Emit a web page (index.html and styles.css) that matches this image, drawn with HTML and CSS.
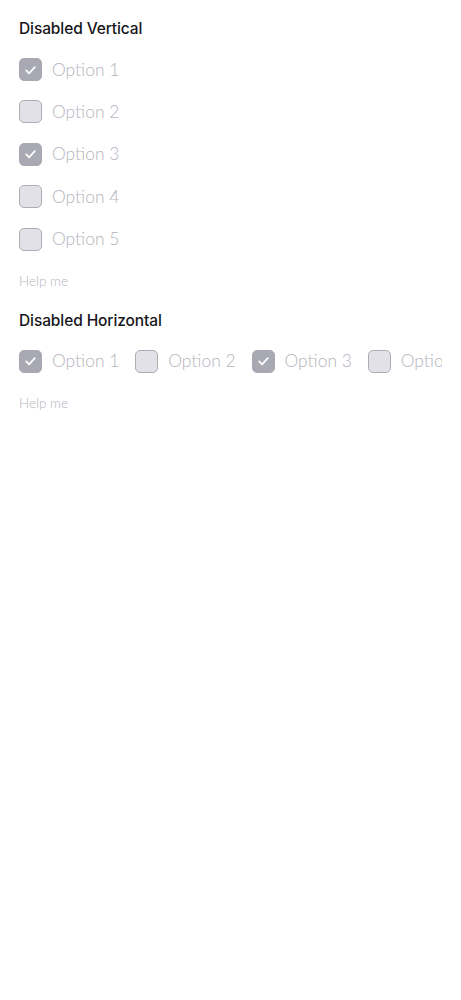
FILE: index.html
```html
<!DOCTYPE html>
<html>
<head>
<meta charset="utf-8">
<link rel="stylesheet" href="styles.css">
</head>
<body>
<div class="page">
  <section class="group">
    <h2 class="title">Disabled Vertical</h2>
    <div class="list vertical">
      <label class="opt"><span class="box checked"><svg viewBox="0 0 22 22"><path d="M6.5 11.5l3 3 6-6.5"/></svg></span><span class="txt">Option 1</span></label>
      <label class="opt"><span class="box"></span><span class="txt">Option 2</span></label>
      <label class="opt"><span class="box checked"><svg viewBox="0 0 22 22"><path d="M6.5 11.5l3 3 6-6.5"/></svg></span><span class="txt">Option 3</span></label>
      <label class="opt"><span class="box"></span><span class="txt">Option 4</span></label>
      <label class="opt"><span class="box"></span><span class="txt">Option 5</span></label>
    </div>
    <p class="help">Help me</p>
  </section>
  <section class="group">
    <h2 class="title">Disabled Horizontal</h2>
    <div class="list horizontal">
      <label class="opt"><span class="box checked"><svg viewBox="0 0 22 22"><path d="M6.5 11.5l3 3 6-6.5"/></svg></span><span class="txt">Option 1</span></label>
      <label class="opt"><span class="box"></span><span class="txt">Option 2</span></label>
      <label class="opt"><span class="box checked"><svg viewBox="0 0 22 22"><path d="M6.5 11.5l3 3 6-6.5"/></svg></span><span class="txt">Option 3</span></label>
      <label class="opt"><span class="box"></span><span class="txt">Option 4</span></label>
      <label class="opt"><span class="box"></span><span class="txt">Option 5</span></label>
    </div>
    <p class="help">Help me</p>
  </section>
</div>
</body>
</html>
```
FILE: styles.css
```css
* { box-sizing: border-box; }
html, body { margin: 0; padding: 0; background: #fff; }
body { font-family: "Inter", "Lato", sans-serif; }
.page { padding: 19px 19px 0 19px; }
.group { margin-bottom: 22px; }
.title {
  margin: 0;
  font-size: 15.5px;
  font-weight: 500;
  color: #16161a;
  line-height: 20px;
  letter-spacing: -0.1px;
}
.list { display: flex; }
.vertical { flex-direction: column; gap: 19.4px; margin-top: 19px; }
.horizontal { flex-direction: row; gap: 16px; margin-top: 19px; overflow: hidden; white-space: nowrap; }
.opt { display: flex; align-items: center; gap: 10px; flex-shrink: 0; }
.box {
  width: 23px; height: 23px;
  border-radius: 5px;
  background: #e1e1e7;
  border: 1.5px solid #adadb5;
  display: flex; align-items: center; justify-content: center;
  flex-shrink: 0;
}
.box.checked { background: #a9a9b3; border-color: #a9a9b3; }
.box svg { width: 22px; height: 22px; fill: none; stroke: #fff; stroke-width: 1.8; stroke-linecap: round; stroke-linejoin: round; }
.txt {
  font-family: "Lato", sans-serif;
  font-weight: 300;
  font-size: 17.4px;
  color: #b4b4bc;
  line-height: 22px;
}
.help {
  margin: 22px 0 0 0;
  font-size: 13.5px;
  font-weight: 300;
  color: #b5b5bd;
  line-height: 16px;
  font-family: "Lato", sans-serif;
}
```
